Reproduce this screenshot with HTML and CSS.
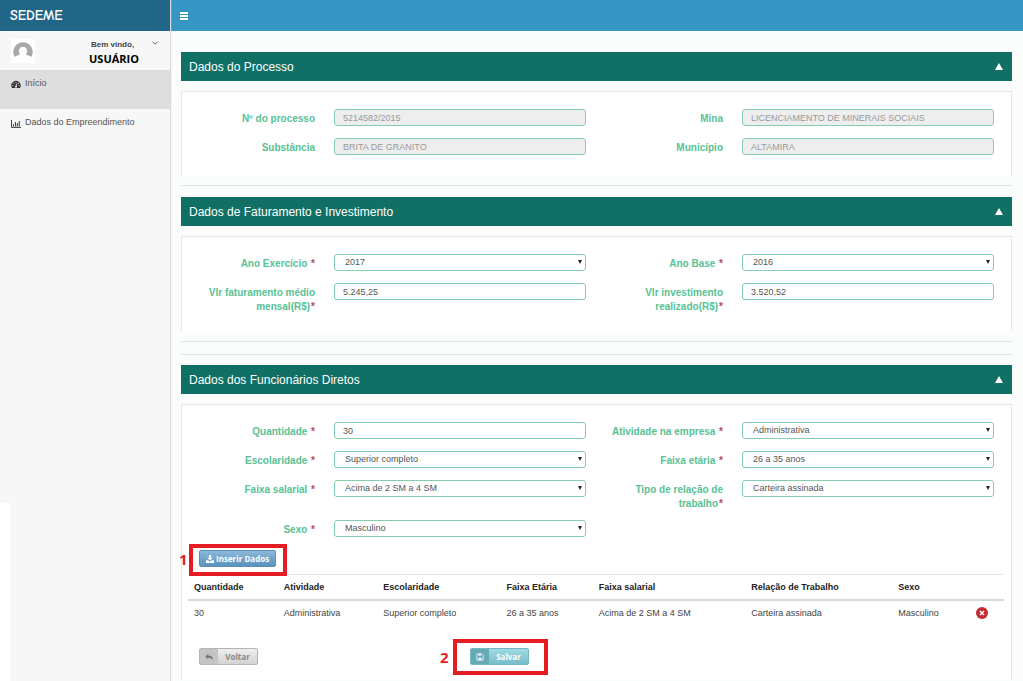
FILE: index.html
```html
<!DOCTYPE html>
<html lang="pt-BR">
<head>
<meta charset="utf-8">
<title>SEDEME</title>
<link rel="stylesheet" href="styles.css">
</head>
<body>
<div class="app">
  <aside class="sidebar">
    <div class="brand">SEDEME</div>
    <div class="user">
      <svg class="avatar" viewBox="0 0 24 24" aria-hidden="true"><rect width="24" height="24" fill="#fff"/><path d="M3.700 18A9.700 9.700 0 1 1 20.300 18C19.300 16.800 17.200 16.300 14.500 15.400A4.200 4.200 0 1 0 9.500 15.400C6.800 16.300 4.700 16.800 3.700 18Z" fill="#a6a8aa"/></svg>
      <div class="user-text"><span class="welcome">Bem vindo,</span><span class="user-name">USUÁRIO</span></div>
      <button class="user-toggle" type="button" aria-label="Abrir menu do usuário"><svg viewBox="0 0 6 4"><path d="M.5.8 3 3.200 5.500.8" fill="none" stroke="#555" stroke-width=".9"/></svg></button>
    </div>
    <nav class="nav">
      <a class="nav-item active" href="#inicio"><svg viewBox="0 0 14 12"><path d="M1.500 11A6.500 6.500 0 1 1 12.500 11Z" fill="#333"/><path d="M7 9 8.300 4.500" stroke="#ddd" stroke-width="1.200"/><circle cx="7" cy="9" r="1.500" fill="#ddd"/><g fill="#ddd"><circle cx="2.700" cy="7.500" r=".8"/><circle cx="4" cy="4.300" r=".8"/><circle cx="7" cy="3" r=".8"/><circle cx="10.300" cy="4.500" r=".8"/><circle cx="11.300" cy="7.500" r=".8"/></g></svg>Início</a>
      <a class="nav-item" href="#empreendimento"><svg viewBox="0 0 14 12"><path d="M.6 1v10.400H14M3.500 10V7M6.200 10V4M8.900 10V5.500M11.600 10V2.500" fill="none" stroke="#333" stroke-width="1.400"/></svg>Dados do Empreendimento</a>
    </nav>
    <div class="sidebar-patch"></div>
  </aside>
  <div class="page">
    <header class="topbar"><button class="menu-button" type="button" aria-label="Menu"><svg viewBox="0 0 8 8"><path d="M0 1h8M0 4h8M0 7h8" stroke="#fff" stroke-width="2"/></svg></button></header>
    <main class="content">
      <section class="block">
        <h2 class="block-title">Dados do Processo<button class="collapse" type="button" aria-label="Recolher"></button></h2>
        <div class="panel">
          <div class="form-row">
            <div class="field"><label for="processo">Nº do processo</label><input id="processo" value="5214582/2015" disabled></div>
            <div class="field"><label for="mina">Mina</label><input id="mina" value="LICENCIAMENTO DE MINERAIS SOCIAIS" disabled></div>
          </div>
          <div class="form-row">
            <div class="field"><label for="substancia">Substância</label><input id="substancia" value="BRITA DE GRANITO" disabled></div>
            <div class="field"><label for="municipio">Município</label><input id="municipio" value="ALTAMIRA" disabled></div>
          </div>
        </div>
      </section>
      <hr>
      <section class="block">
        <h2 class="block-title">Dados de Faturamento e Investimento<button class="collapse" type="button" aria-label="Recolher"></button></h2>
        <div class="panel">
          <div class="form-row">
            <div class="field"><label for="exercicio">Ano Exercício <b>*</b></label><span class="select"><select id="exercicio"><option>2017</option></select></span></div>
            <div class="field"><label for="base">Ano Base <b>*</b></label><span class="select"><select id="base"><option>2016</option></select></span></div>
          </div>
          <div class="form-row">
            <div class="field"><label for="faturamento">Vlr faturamento médio mensal(R$)<b>*</b></label><input id="faturamento" value="5.245,25"></div>
            <div class="field"><label for="investimento">Vlr investimento realizado(R$)<b>*</b></label><input id="investimento" value="3.520,52"></div>
          </div>
        </div>
      </section>
      <hr>
      <hr class="second">
      <section class="block">
        <h2 class="block-title">Dados dos Funcionários Diretos<button class="collapse" type="button" aria-label="Recolher"></button></h2>
        <div class="panel">
          <div class="form-row">
            <div class="field"><label for="quantidade">Quantidade <b>*</b></label><input id="quantidade" value="30"></div>
            <div class="field"><label for="atividade">Atividade na empresa <b>*</b></label><span class="select"><select id="atividade"><option>Administrativa</option></select></span></div>
          </div>
          <div class="form-row">
            <div class="field"><label for="escolaridade">Escolaridade <b>*</b></label><span class="select"><select id="escolaridade"><option>Superior completo</option></select></span></div>
            <div class="field"><label for="etaria">Faixa etária <b>*</b></label><span class="select"><select id="etaria"><option>26 a 35 anos</option></select></span></div>
          </div>
          <div class="form-row">
            <div class="field"><label for="salarial">Faixa salarial <b>*</b></label><span class="select"><select id="salarial"><option>Acima de 2 SM a 4 SM</option></select></span></div>
            <div class="field"><label for="relacao">Tipo de relação de trabalho<b>*</b></label><span class="select"><select id="relacao"><option>Carteira assinada</option></select></span></div>
          </div>
          <div class="form-row">
            <div class="field"><label for="sexo">Sexo <b>*</b></label><span class="select"><select id="sexo"><option>Masculino</option></select></span></div>
          </div>
          <div class="insert-row">
            <div class="marked marked-insert">
              <button class="btn btn-insert" type="button"><svg viewBox="0 0 10 10"><path d="M3.700 0h2.600v3.500h2.200L5 7 1.500 3.500h2.200ZM0 6.500h2.500L5 8.500l2.500-2H10V10H0Z" fill="#fff"/></svg>Inserir Dados</button>
              <span class="mark-number">1</span>
            </div>
          </div>
          <table class="staff">
            <thead><tr><th class="col-quantity">Quantidade</th><th class="col-activity">Atividade</th><th class="col-education">Escolaridade</th><th class="col-age">Faixa Etária</th><th class="col-salary">Faixa salarial</th><th class="col-relation">Relação de Trabalho</th><th class="col-sex">Sexo</th><th></th></tr></thead>
            <tbody><tr><td>30</td><td>Administrativa</td><td>Superior completo</td><td>26 a 35 anos</td><td>Acima de 2 SM a 4 SM</td><td>Carteira assinada</td><td>Masculino</td><td><button class="delete" type="button" aria-label="Excluir"><svg viewBox="0 0 12 12"><circle cx="6" cy="6" r="6" fill="#c62a33"/><path d="m4 4 4 4M8 4 4 8" stroke="#fff" stroke-width="1.500"/></svg></button></td></tr></tbody>
          </table>
          <div class="actions">
            <div><button class="btn btn-split btn-back" type="button"><span class="btn-icon"><svg viewBox="0 0 10 10"><path d="M4 1v2.200c3.500 0 5.500 1.300 5.500 3.500 0 1-.5 1.800-1 2.300.2-2.500-1.700-3-4.500-3v2.200L.5 4.600Z" fill="#777"/></svg></span><span class="btn-text">Voltar</span></button></div>
            <div class="marked marked-save">
              <button class="btn btn-split btn-save" type="button"><span class="btn-icon"><svg viewBox="0 0 10 10"><path d="M1 1h6.500L9 2.500V9H1Z" fill="none" stroke="#e5f6f8"/><path d="M3 1h3.500v2.500H3ZM3 6h4v3H3Z" fill="#e5f6f8"/></svg></span><span class="btn-text">Salvar</span></button>
              <span class="mark-number">2</span>
            </div>
          </div>
        </div>
      </section>
    </main>
  </div>
</div>
</body>
</html>
```
FILE: styles.css
```css
* { box-sizing: border-box; }
body { margin: 0; background: #fbfcfc; color: #444; font: 9px/14px "Liberation Sans", Arial, sans-serif; }
button { border: 0; padding: 0; background: none; cursor: pointer; }
svg { display: block; }
.app { display: grid; grid-template-columns: 170px 1fr; min-height: 100vh; }
.sidebar { position: relative; background: #f7f7f7; box-shadow: 1px 0 1px #d8d8d8; }
.brand { height: 31px; padding-left: 10px; background: #216687; color: #fff; font: 600 14px/32px "Comic Neue", "Open Sans", sans-serif; }
.user { display: flex; height: 39px; padding: 8px 12px 0 11px; }
.avatar { width: 24px; height: 24px; }
.user-text { display: flex; flex-direction: column; align-items: center; width: 50px; margin-left: 54px; }
.welcome { font: bold 8px/12px "Liberation Sans", sans-serif; align-self: flex-start; padding-left: 2px; }
.user-name { color: #000; font: bold 11px/16px "Open Sans", sans-serif; }
.user-toggle { width: 6px; height: 8px; margin-left: auto; }
.nav-item { display: flex; gap: 4px; height: 39px; padding: 6px 11px; color: #555; text-decoration: none; white-space: nowrap; }
.nav-item svg { width: 10px; height: 9px; margin-top: 4px; }
.nav-item.active { background: #dedede; }
.sidebar-patch { position: absolute; left: 0; bottom: 0; width: 10px; height: 178px; background: #fff; }
.topbar { display: flex; align-items: center; height: 31px; padding-left: 10px; background: #3697c4; }
.menu-button { width: 8px; height: 8px; }
.content { padding: 21px 11px 0; }
.block-title { display: flex; align-items: center; justify-content: space-between; height: 29px; margin: 0 0 10px; padding: 0 9px 0 8px; background: #107066; color: #fff; font-size: 12px; font-weight: 400; }
.collapse { border: 4px solid transparent; border-top: 0; border-bottom: 7px solid #fff; }
.panel { padding: 17px 7px 8px 6px; border: 1px solid #e4e6e8; border-bottom: 0; background: #fff; }
hr { height: 1px; margin: 10px 0 11px; border: 0; background: #e2e4e4; }
.second { margin: 12px 0 10px; }
.form-row { display: grid; grid-template-columns: 1fr 1fr; }
.field { display: grid; grid-template-columns: 1fr 2fr; align-items: start; min-height: 29px; padding-bottom: 9px; }
label { padding: 3px 9px 0 0; color: #59c294; font-size: 10px; font-weight: bold; text-align: right; }
label b { padding-left: 1px; color: #b8485c; }
input, .select { width: calc(100% - 20px); margin: 0 10px; }
input, select { height: 17px; border: 1px solid #83cfad; border-radius: 3px; background: #fff; color: #555; font: 9px/15px "Liberation Sans", sans-serif; appearance: none; }
input { padding: 0 8px; }
select { display: block; width: 100%; margin: 0; padding: 0 10px; }
input:disabled { background: #eee; border-color: #83cfad; color: #999; }
.select { position: relative; }
.select::after { content: ""; position: absolute; right: 4px; top: 6px; border: 2px solid transparent; border-top: 4px solid #222; border-bottom: 0; pointer-events: none; }
.insert-row { display: flex; padding: 1px 0 7px 11px; }
.marked { position: relative; }
.marked::before { content: ""; position: absolute; border: 4px solid #e61c24; pointer-events: none; }
.marked-insert::before { inset: -6px -11px -9px -10px; }
.marked-save::before { inset: -9px -19px -10px -17px; }
.mark-number { position: absolute; top: 0; color: #e61c24; font: bold 15px/18px "Open Sans", sans-serif; }
.marked-insert .mark-number { left: -20px; }
.marked-save .mark-number { left: -30px; }
.btn { display: flex; align-items: center; height: 17px; border: 1px solid; border-radius: 2px; font: bold 8px/15px "Open Sans", sans-serif; }
.btn svg { width: 8px; height: 8px; }
.btn-insert { gap: 2px; padding: 0 6px; border-color: #5c8fb5; background: linear-gradient(#8cb8da, #5b93bd); color: #fff; }
.btn-icon { display: grid; place-items: center; width: 18px; height: 15px; }
.btn-text { width: 39px; text-align: center; }
.btn-back { border-color: #b5b5b5; background: linear-gradient(#eee, #d2d2d2); color: #888; }
.btn-back .btn-icon { background: #c4c4c4; }
.btn-save { border-color: #75b6c3; background: linear-gradient(#9fdbe3, #78bdcb); color: #fff; }
.btn-save .btn-icon { background: #68a9b8; }
.staff { width: 100%; border-collapse: collapse; table-layout: fixed; border-top: 1px solid #e6e6e6; }
.staff th, .staff td { padding: 5px 6px; text-align: left; white-space: nowrap; }
.staff th { border-bottom: 2px solid #d8d8d8; color: #222; }
.col-quantity { width: 11%; }
.col-activity { width: 12.2%; }
.col-education { width: 15.1%; }
.col-age { width: 11.3%; }
.col-salary { width: 18.7%; }
.col-relation { width: 18%; }
.col-sex { width: 9.5%; }
.delete { display: block; width: 12px; height: 12px; margin: 1px 0; }
.delete svg { width: 12px; height: 12px; }
.actions { display: grid; grid-template-columns: 1fr 2fr; column-gap: 4px; padding: 23px 0 6px 11px; }
.actions > div { justify-self: start; }
```
